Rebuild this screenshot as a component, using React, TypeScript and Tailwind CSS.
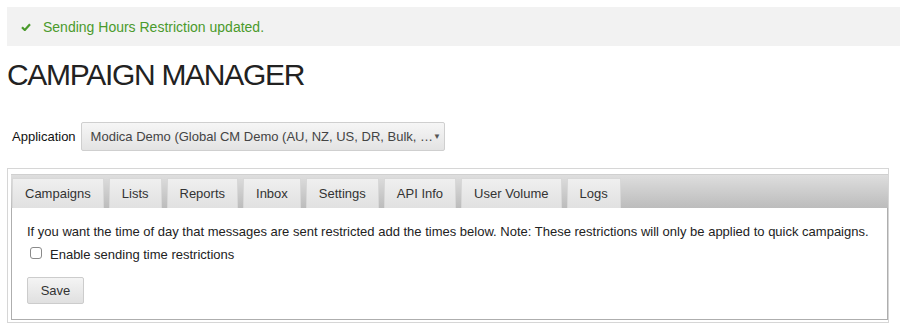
import React from "react";

const tabs = ["Campaigns", "Lists", "Reports", "Inbox", "Settings", "API Info", "User Volume", "Logs"];

export default function App() {
  return (
    <div
      className="w-[900px] h-[332px] bg-white overflow-hidden"
      style={{ fontFamily: '"Liberation Sans", Arial, sans-serif' }}
    >
      <div className="ml-[7px] mt-[7px] h-[39px] bg-[#f2f2f2] flex items-center pl-[14px]">
        <svg width="10" height="8" viewBox="0 0 10 8" className="mr-[12px] mt-[1px]">
          <path d="M1 4.2 L3.8 7 L9 1.2" fill="none" stroke="#4a9a2c" strokeWidth="2.2" />
        </svg>
        <span className="text-[14px] leading-[18px] text-[#4a9a2c]">Sending Hours Restriction updated.</span>
      </div>

      <h1 className="ml-[7px] mt-[11px] text-[30px] leading-[36px] tracking-[-1.3px] text-[#222]">
        CAMPAIGN MANAGER
      </h1>

      <div className="ml-[12px] mt-[29px] flex items-center gap-[5px]">
        <span className="text-[13px] text-[#111]">Application</span>
        <div className="w-[364px] h-[29px] border border-[#cfcfcf] rounded-[2px] bg-gradient-to-b from-[#f6f6f6] to-[#e3e3e3] flex items-center pl-[9px] pr-[5px]">
          <span className="flex-1 text-[13px] text-[#444] whitespace-nowrap">
            Modica Demo (Global CM Demo (AU, NZ, US, DR, Bulk, …
          </span>
          <span className="text-[8px] text-[#555]">▼</span>
        </div>
      </div>

      <div className="ml-[7px] mt-[17px] w-[882px] h-[155px] border border-[#d6d6d6] pt-[5px] pl-[3px] pb-[2px]">
        <div className="flex flex-col h-full">
          <div className="h-[34px] bg-gradient-to-b from-[#dedede] to-[#bcbcbc] flex items-end pl-[1px] gap-[5px] border-t border-[#d0d0d0]">
            {tabs.map((t) => (
              <div
                key={t}
                className="h-[30px] px-[12px] border border-b-0 border-[#d8d8d8] bg-gradient-to-b from-[#efefef] to-[#e1e1e1] flex items-center text-[13px] text-[#333]"
              >
                {t}
              </div>
            ))}
          </div>
          <div className="flex-1 bg-white border border-t-0 border-[#aeaeae] pl-[15px] pt-[15px]">
            <p className="text-[13px] leading-[18px] text-[#222] whitespace-nowrap">
              If you want the time of day that messages are sent restricted add the times below. Note: These restrictions will only be applied to quick campaigns.
            </p>
            <label className="flex items-center mt-[3px] ml-[3px] h-[17px]">
              <input
                type="checkbox"
                className="appearance-none w-[12px] h-[12px] border border-[#8a8a8a] rounded-[3px] bg-white"
              />
              <span className="ml-[8px] text-[13px] leading-[18px] text-[#222] mt-[4px]">Enable sending time restrictions</span>
            </label>
            <button className="mt-[16px] w-[57px] h-[27px] border border-[#cccccc] rounded-[2px] bg-gradient-to-b from-[#f4f4f4] to-[#e0e0e0] text-[13px] text-[#333]">
              Save
            </button>
          </div>
        </div>
      </div>
    </div>
  );
}
